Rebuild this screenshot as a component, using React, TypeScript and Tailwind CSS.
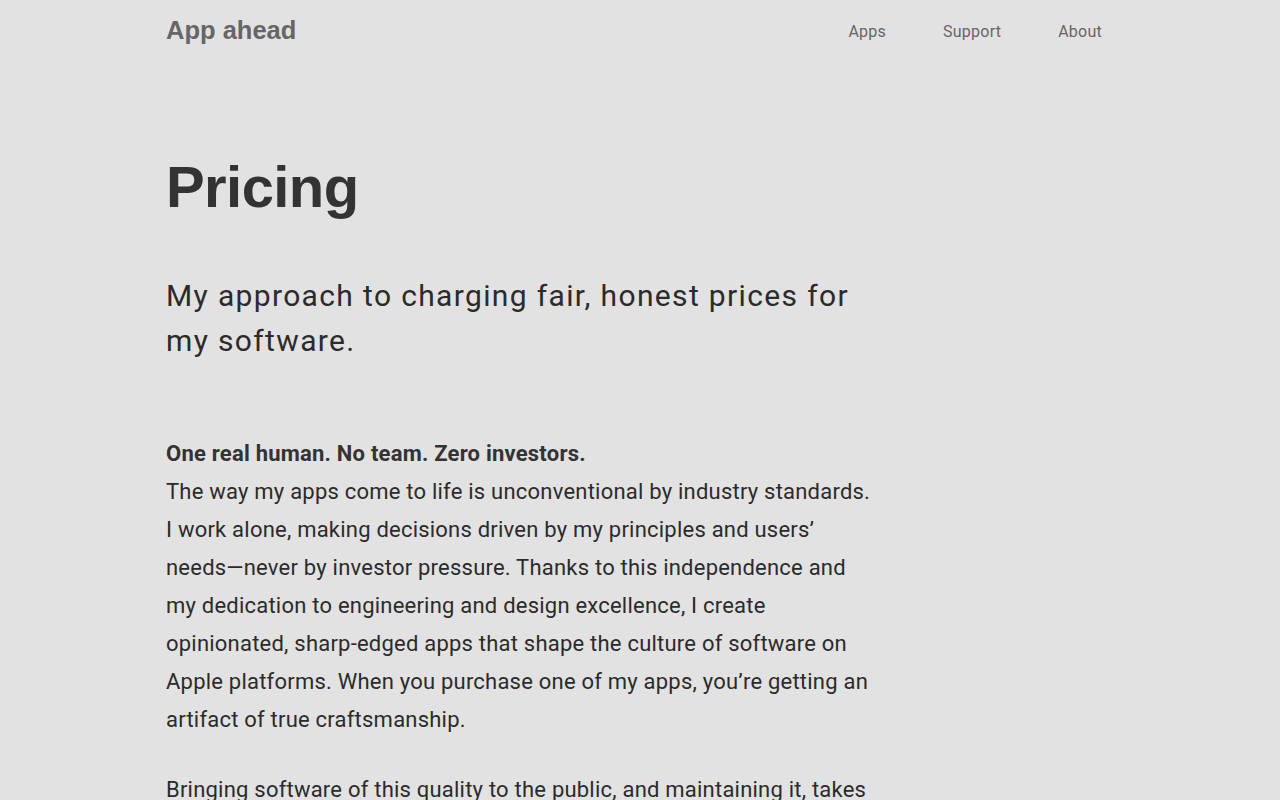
const nav = ["Apps", "Support", "About"];

export default function App() {
  return (
    <div className="min-h-screen bg-[#e2e2e2] text-[#2b2b2b] font-['Roboto',sans-serif]">
      <div className="mx-auto w-[948px]">
        <header className="flex h-[62px] items-center justify-between">
          <div className="font-['Liberation_Sans',sans-serif] text-[25.5px] font-bold leading-none text-[#666666] -mt-[1px]">
            App ahead
          </div>
          <nav className="mt-[2px] flex items-center gap-[57px] pr-[12px] text-[16px] tracking-[0.015em] text-[#666666]">
            {nav.map((item) => (
              <a key={item} href="#" className="leading-none">
                {item}
              </a>
            ))}
          </nav>
        </header>

        <main className="max-w-[708px]">
          <h1 className="mt-[96px] font-['Liberation_Sans',sans-serif] text-[58px] font-bold leading-none tracking-[-0.01em] text-[#333333]">
            Pricing
          </h1>
          <p className="mt-[57px] text-[30px] leading-[45px] tracking-[0.045em] text-[#2b2b2b]">
            My approach to charging fair, honest prices for my software.
          </p>

          <section className="mt-[72px] text-[22px] leading-[38px] tracking-[0.01em]">
            <p>
              <strong className="font-bold text-[#333333]">
                One real human. No team. Zero investors.
              </strong>
              <br />
              The way my apps come to life is unconventional by industry
              standards. I work alone, making decisions driven by my principles
              and users’ needs—never by investor pressure. Thanks to this
              independence and my dedication to engineering and design
              excellence, I create opinionated, sharp-edged apps that shape the
              culture of software on Apple platforms. When you purchase one of
              my apps, you’re getting an artifact of true craftsmanship.
            </p>
            <p className="mt-[32px]">
              Bringing software of this quality to the public, and maintaining
              it, takes time, effort and resources. That’s why my apps are not
              free, and why I believe the price should reflect the value they
              bring to your everyday work.
            </p>
          </section>
        </main>
      </div>
    </div>
  );
}
